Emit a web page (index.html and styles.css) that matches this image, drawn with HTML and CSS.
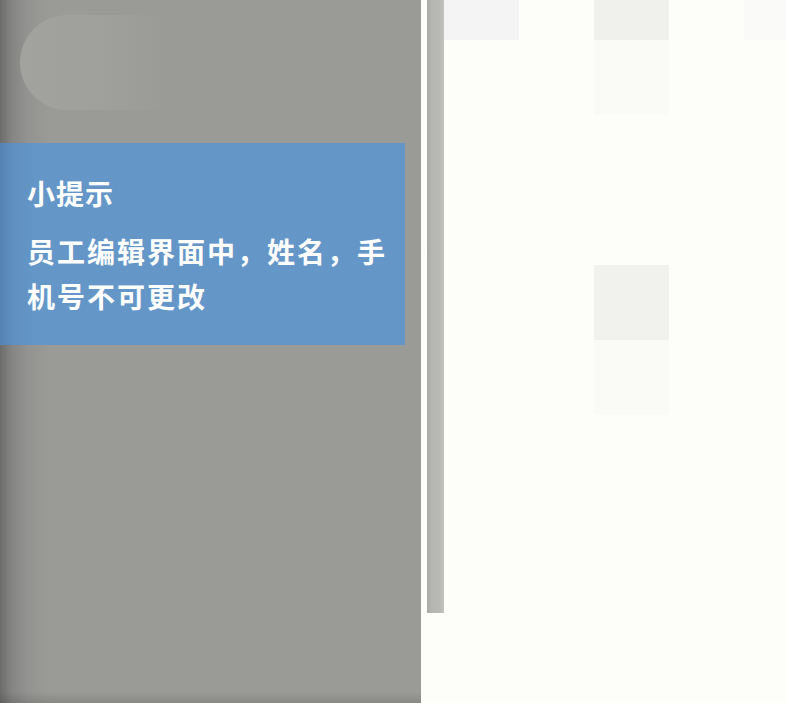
FILE: index.html
```html
<!DOCTYPE html>
<html lang="zh-CN">
<head>
<meta charset="utf-8">
<title>小提示</title>
<link rel="stylesheet" href="styles.css">
</head>
<body>
<div class="page">
  <div class="left">
    <div class="pill"></div>
    <div class="tip">
      <div class="tip-title">小提示</div>
      <div class="tip-body">员工编辑界面中，姓名，手机号不可更改</div>
    </div>
  </div>
  <div class="right">
    <div class="bar"></div>
    <div class="grid">
      <div class="cell c-a"></div>
      <div class="cell c-b"></div>
      <div class="cell c-c"></div>
      <div class="cell c-d"></div>
      <div class="cell c-e"></div>
      <div class="cell c-f"></div>
    </div>
  </div>
</div>
</body>
</html>
```
FILE: styles.css
```css
html, body {
  margin: 0;
  padding: 0;
}
body {
  font-family: "Noto Sans CJK SC", "Noto Sans", sans-serif;
  background: #fdfdf9;
}
.page {
  display: flex;
  width: 786px;
  height: 703px;
  overflow: hidden;
}
.left {
  width: 421px;
  flex: none;
  display: flex;
  flex-direction: column;
  background:
    linear-gradient(to bottom, rgba(0,0,0,0) 0, rgba(0,0,0,0) 692px, rgba(0,0,0,0.12) 703px),
    linear-gradient(to right, #6c6c6a 0, #858583 12px, #939391 28px, #9a9a96 50px, #9a9a96 100%);
}
.pill {
  margin: 15px 0 0 20px;
  width: 150px;
  height: 95px;
  border-radius: 48px 0 0 48px;
  background: linear-gradient(to right, #a2a29f 0, #9f9f9b 55%, rgba(154,154,150,0) 100%);
}
.tip {
  margin-top: 33px;
  width: 405px;
  height: 202px;
  box-sizing: border-box;
  padding: 28px 10px 0 27px;
  color: #ffffff;
  background: linear-gradient(to right, #5583b3 0, #6090c2 14px, #6596c8 36px, #6596c8 100%);
  font-weight: 700;
  font-size: 28px;
  letter-spacing: 2px;
}
.tip-title {
  line-height: 45px;
  letter-spacing: 1px;
}
.tip-body {
  margin-top: 13px;
  line-height: 45px;
}
.right {
  flex: 1;
  display: flex;
  align-items: flex-start;
  background: #fdfdf9;
}
.bar {
  margin-left: 6px;
  width: 17px;
  height: 613px;
  flex: none;
  background: linear-gradient(to right, #a9a9a5 0, #b6b6b2 5px, #b9b9b5 13px, #c3c3bf 17px);
}
.grid {
  display: grid;
  grid-template-columns: repeat(5, 75px);
  grid-template-rows: 40px repeat(5, 75px);
}
.c-a { grid-area: 1 / 1; background: #f4f4f4; }
.c-b { grid-area: 1 / 3; background: #f0f0ec; }
.c-c { grid-area: 1 / 5; background: #fafaf8; }
.c-d { grid-area: 2 / 3; background: #fafaf7; }
.c-e { grid-area: 5 / 3; background: #f1f1ee; }
.c-f { grid-area: 6 / 3; background: #fafaf7; }
```
